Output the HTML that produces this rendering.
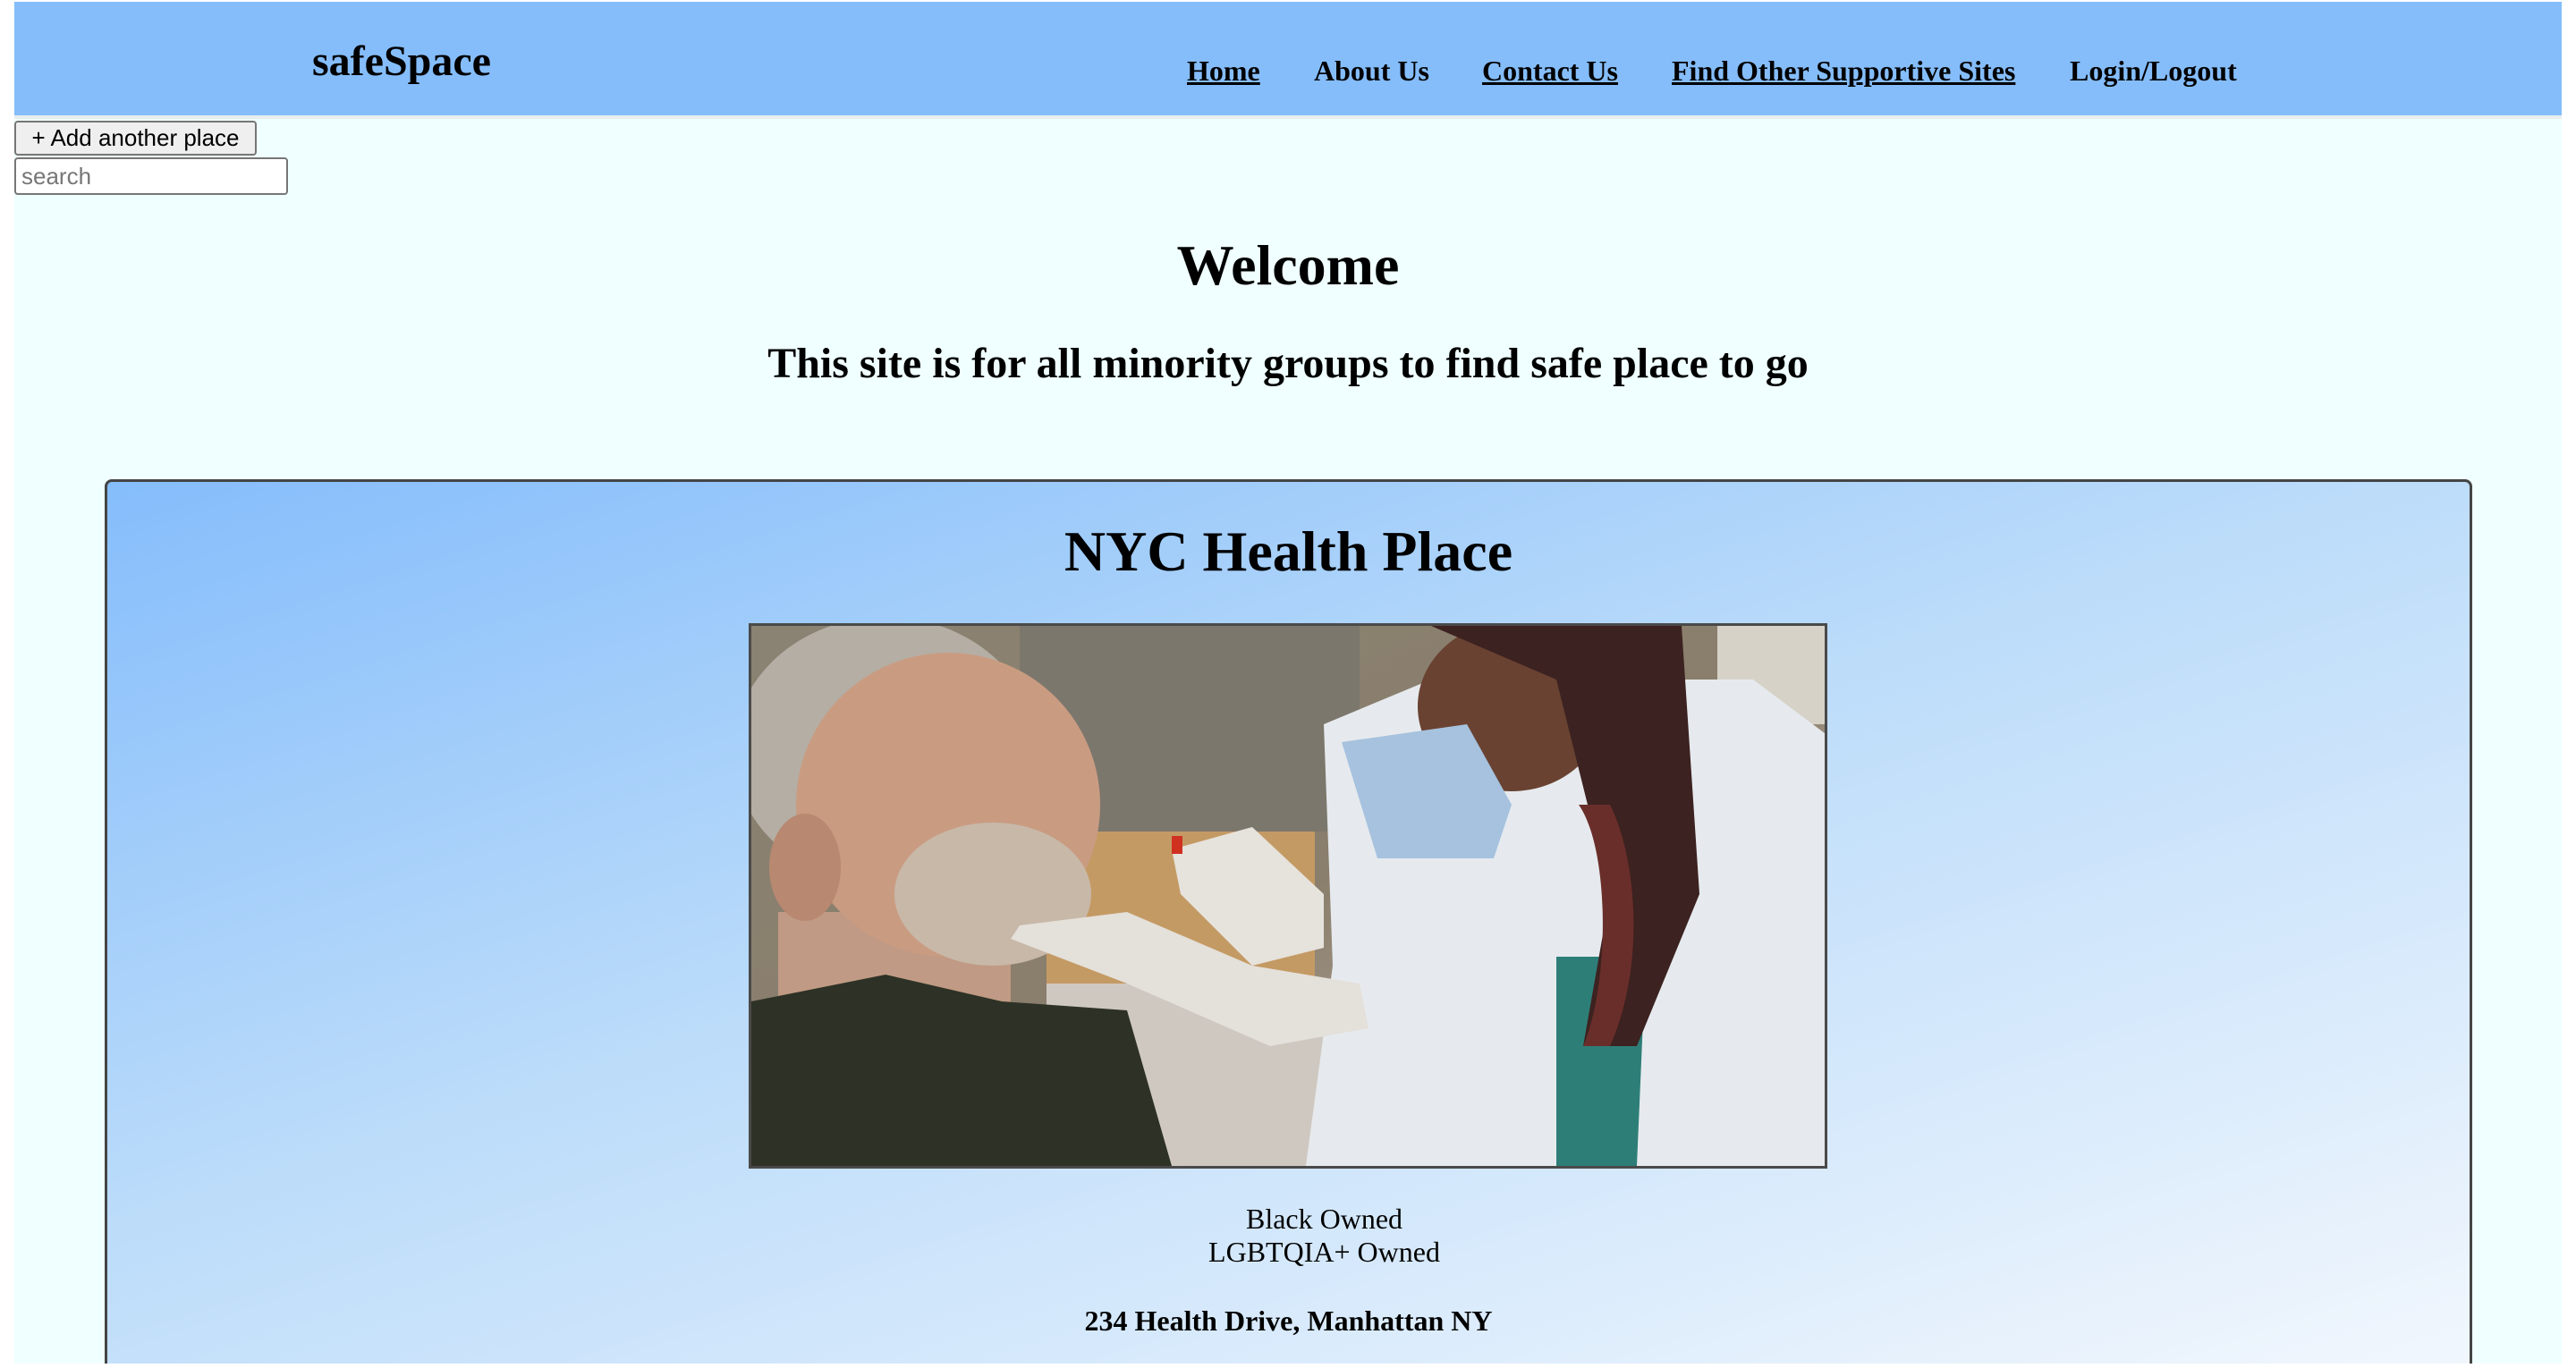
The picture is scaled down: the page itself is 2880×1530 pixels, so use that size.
<!DOCTYPE html>
<html><head><meta charset="utf-8"><style>
html,body{margin:0;padding:0;background:#fff;width:2880px;height:1530px;overflow:hidden}
#page{position:absolute;left:16px;top:2px;width:2848px;height:1523px;background:#f0ffff;overflow:hidden;font-family:"Liberation Serif",serif;color:#000}
#hdr{position:absolute;left:0;top:0;width:2848px;height:127px;background:#85bdfb;border-bottom:4px solid #e8eeee}
.logo{position:absolute;left:333px;top:43px;font-size:48px;font-weight:bold;line-height:1}
.nav{position:absolute;top:61px;font-size:32px;font-weight:bold;line-height:1;white-space:nowrap}
.u{text-decoration:underline;text-decoration-thickness:3px}
.btn{position:absolute;left:0;top:133px;width:271px;height:39px;box-sizing:border-box;border:2px solid #767676;border-radius:4px;background:#efefef;font-family:"Liberation Sans",sans-serif;font-size:26px;line-height:35px;text-align:center}
.inp{position:absolute;left:0;top:174px;width:306px;height:42px;box-sizing:border-box;border:2px solid #767676;border-radius:4px;background:#fff;font-family:"Liberation Sans",sans-serif;font-size:26px;color:#777;line-height:38px;padding-left:6px}
.c{position:absolute;left:0;width:2848px;text-align:center;font-weight:bold;line-height:1}
#card{position:absolute;left:101px;top:534px;width:2641px;height:1000px;border:3px solid #454545;border-radius:8px;background:linear-gradient(162deg,#85bdfb 0%,#bcdcfa 45%,#f2f7fd 100%)}
#img{position:absolute;left:717px;top:158px;width:1200px;height:604px;border:3px solid #4a4a4a}
</style></head><body>
<div id="page">
<div id="hdr">
<div class="logo">safeSpace</div>
<div class="nav u" style="left:1311px">Home</div>
<div class="nav" style="left:1453px">About Us</div>
<div class="nav u" style="left:1641px">Contact Us</div>
<div class="nav u" style="left:1853px">Find Other Supportive Sites</div>
<div class="nav" style="left:2298px">Login/Logout</div>
</div>
<div class="btn">+ Add another place</div>
<div class="inp">search</div>
<div class="c" style="top:263px;font-size:64px">Welcome</div>
<div class="c" style="top:381px;font-size:48px">This site is for all minority groups to find safe place to go</div>
<div id="card">
<div style="position:absolute;left:0;width:2641px;top:46px;text-align:center;font-size:64px;font-weight:bold;line-height:1">NYC Health Place</div>
<div id="img"><svg width="1200" height="604" viewBox="0 0 1200 604">
<defs><linearGradient id="bg" x1="0" y1="0" x2="1" y2="1"><stop offset="0" stop-color="#8a8272"/><stop offset="0.5" stop-color="#8a7e6c"/><stop offset="1" stop-color="#c8c0b4"/></linearGradient></defs>
<rect width="1200" height="604" fill="url(#bg)"/>
<rect x="300" y="0" width="380" height="230" fill="#7c776c"/>
<rect x="330" y="230" width="300" height="200" fill="#c49a64"/>
<rect x="330" y="400" width="500" height="204" fill="#cfc8c0"/>
<rect x="1080" y="0" width="120" height="110" fill="#d6d2c8"/>
<ellipse cx="150" cy="140" rx="170" ry="150" fill="#b4aea4"/>
<rect x="30" y="320" width="260" height="120" fill="#c09a84"/>
<ellipse cx="220" cy="200" rx="170" ry="170" fill="#c99c82"/>
<ellipse cx="270" cy="300" rx="110" ry="80" fill="#c8b8a8"/>
<ellipse cx="60" cy="270" rx="40" ry="60" fill="#b88870"/>
<path d="M0 420 L150 390 L280 420 L420 430 L470 604 L0 604 Z" fill="#2e3226"/>
<path d="M640 110 L760 60 L1120 60 L1200 120 L1200 604 L620 604 L650 380 Z" fill="#e6eaee"/>
<path d="M900 370 L1000 370 L990 604 L900 604 Z" fill="#2e7e78"/>
<ellipse cx="850" cy="90" rx="105" ry="95" fill="#6a4232"/>
<path d="M760 0 L1040 0 L1060 300 L990 470 L930 470 L960 300 L900 60 Z" fill="#3c2220"/>
<path d="M925 200 C960 250 960 400 930 470 L960 470 C1000 380 990 260 960 200Z" fill="#6a2e2a"/>
<path d="M660 130 L800 110 L850 200 L830 260 L700 260 Z" fill="#a6c2de"/>
<path d="M300 335 L420 320 L560 380 L680 400 L690 450 L580 470 L420 400 L290 350 Z" fill="#e4e0da"/>
<path d="M470 250 L560 225 L640 300 L640 360 L560 380 L480 300 Z" fill="#e6e2dc"/>
<rect x="470" y="235" width="12" height="20" fill="#d03020"/>
</svg></div>
<div style="position:absolute;left:80px;width:2561px;top:806px;text-align:center;font-size:32px;line-height:37px">Black Owned<br>LGBTQIA+ Owned</div>
<div style="position:absolute;left:0;width:2641px;top:922px;text-align:center;font-size:32px;font-weight:bold;line-height:1">234 Health Drive, Manhattan NY</div>
</div>
</div>
</body></html>
